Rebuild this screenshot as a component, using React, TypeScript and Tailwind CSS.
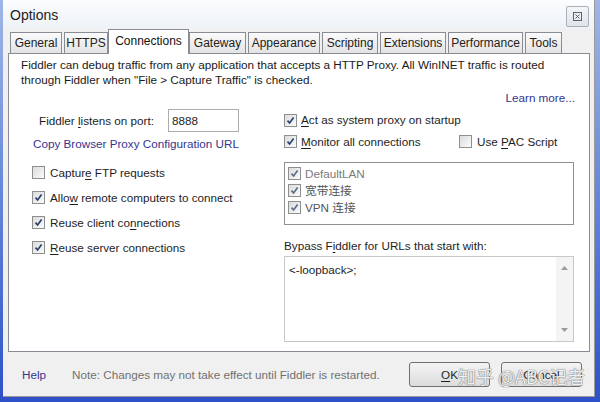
import React from "react";

const F = { fontFamily: '"Liberation Sans", Arial, sans-serif' };

function Check({ checked, disabled }: { checked?: boolean; disabled?: boolean }) {
  return (
    <span className="inline-flex w-[13px] h-[13px] shrink-0 border border-[#8e8f8f] bg-gradient-to-br from-[#dcdcdc] to-[#fbfbfb] items-center justify-center">
      {checked && (
        <svg width="9" height="9" viewBox="0 0 9 9">
          <path d="M1.5 4.6 L3.6 7 L7.6 1.6" fill="none" stroke={disabled ? "#5b6d8a" : "#2a3f6b"} strokeWidth="1.7" />
        </svg>
      )}
    </span>
  );
}

function U({ children }: { children: React.ReactNode }) {
  return <span className="underline underline-offset-[2px]">{children}</span>;
}

const tabs: [string, number][] = [
  ["General", 52],
  ["HTTPS", 44],
  ["Connections", 77],
  ["Gateway", 57],
  ["Appearance", 72],
  ["Scripting", 56],
  ["Extensions", 66],
  ["Performance", 75],
  ["Tools", 37],
];

export default function App() {
  return (
    <div className="relative w-[600px] h-[402px] overflow-hidden bg-gradient-to-b from-[#9fb6e6] to-[#2e50c8]" style={F}>
      <div className="ml-[3px] w-[592px] h-[397px] bg-[#f0f0f0] border-r border-b border-[#9a9a9a] flex flex-col text-[#1e1e1e]">
        {/* title bar */}
        <div className="h-[29px] flex items-center justify-between pl-[7px] pr-[5px] bg-gradient-to-b from-[#fbfdff] to-[#eef2f6]">
          <span className="text-[14px] text-[#222] pt-[2px]">Options</span>
          <span className="w-[23px] h-[21px] mt-[3px] border border-[#a8b0ba] rounded-[2px] bg-gradient-to-b from-[#f4f6f8] to-[#dfe4ea] flex items-center justify-center">
            <svg width="9" height="9" viewBox="0 0 9 9">
              <rect x="0.5" y="0.5" width="8" height="8" fill="none" stroke="#5a6470" />
              <path d="M2.5 2.5 L6.5 6.5 M6.5 2.5 L2.5 6.5" stroke="#5a6470" />
            </svg>
          </span>
        </div>
        {/* tabs */}
        <div className="h-[24px] ml-[7px] flex items-end gap-[2px] relative z-10">
          {tabs.map(([t, w]) =>
            t === "Connections" ? (
              <div
                key={t}
                className="h-[25px] -mb-px bg-white border border-[#898c95] border-b-0 flex items-center justify-center text-[12px] text-[#111] pb-[2px]"
                style={{ width: w + 4, marginLeft: -2, marginRight: -2 }}
              >
                {t}
              </div>
            ) : (
              <div
                key={t}
                className="h-[21px] border border-[#898c95] border-b-0 bg-gradient-to-b from-[#fbfbfb] to-[#e3e3e3] flex items-center justify-center text-[12px] text-[#222]"
                style={{ width: w }}
              >
                {t}
              </div>
            )
          )}
        </div>
        {/* panel */}
        <div className="ml-[5px] mr-[4px] h-[299px] bg-white border border-[#898c95] text-[11.7px] px-[12px] pt-[3px]">
          <div className="leading-[15px] text-[#1a1a1a]">
            Fiddler can debug traffic from any application that accepts a HTTP Proxy. All WinINET traffic is routed
            <br />
            through Fiddler when "File &gt; Capture Traffic" is checked.
          </div>
          <div className="mt-[4px] h-[14px] leading-[14px] text-right text-[#35358f] pr-[2px]">Learn more...</div>
          <div className="mt-[3px] flex">
            {/* left column */}
            <div className="w-[263px] flex flex-col">
              <div className="mt-[1px] h-[23px] flex items-center">
                <span className="ml-[18px]">
                  Fiddler <U>l</U>istens on port:
                </span>
                <div className="ml-[14px] w-[71px] h-[23px] border border-[#abadb3] flex items-center pl-[3px]">8888</div>
              </div>
              <div className="mt-[4px] h-[15px] leading-[15px] ml-[12px] text-[#35358f]">Copy Browser Proxy Configuration URL</div>
              <div className="mt-[9px] flex flex-col">
                {[
                  [false, <>Captur<U>e</U> FTP requests</>],
                  [true, <>Allo<U>w</U> remote computers to connect</>],
                  [true, <>Reuse client co<U>n</U>nections</>],
                  [true, <><U>R</U>euse server connections</>],
                ].map(([c, l], i) => (
                  <div key={i} className="h-[25px] flex items-center ml-[11px] gap-[5px]">
                    <Check checked={c as boolean} />
                    <span>{l as React.ReactNode}</span>
                  </div>
                ))}
              </div>
            </div>
            {/* right column */}
            <div className="w-[290px] flex flex-col">
              <div className="mt-[1px] h-[22px] flex items-center gap-[4px]">
                <Check checked />
                <span>
                  <U>A</U>ct as system proxy on startup
                </span>
              </div>
              <div className="h-[22px] flex items-center">
                <div className="w-[175px] flex items-center gap-[4px]">
                  <Check checked />
                  <span>
                    <U>M</U>onitor all connections
                  </span>
                </div>
                <div className="flex items-center gap-[5px]">
                  <Check />
                  <span>
                    Use <U>P</U>AC Script
                  </span>
                </div>
              </div>
              <div className="mt-[9px] h-[63px] border border-[#8f8f8f] pl-[3px] pt-[2px] flex flex-col" style={{ fontFamily: '"Liberation Sans", "Noto Sans CJK SC", sans-serif' }}>
                {[
                  ["DefaultLAN", true],
                  ["宽带连接", false],
                  ["VPN 连接", false],
                ].map(([t, g]) => (
                  <div key={t as string} className="h-[17px] flex items-center gap-[4px]">
                    <Check checked disabled />
                    <span className={g ? "text-[#7a7a7a]" : "text-[#555]"}>{t as string}</span>
                  </div>
                ))}
              </div>
              <div className="mt-[13px] h-[15px] leading-[15px]">
                Bypass F<U>i</U>ddler for URLs that start with:
              </div>
              <div className="mt-[3px] h-[86px] border border-[#c8c8c8] flex">
                <div className="flex-1 pl-[4px] pt-[4px]">&lt;-loopback&gt;;</div>
                <div className="w-[17px] bg-[#f4f4f4] flex flex-col justify-between items-center py-[9px]">
                  <svg width="7" height="4" viewBox="0 0 7 4">
                    <path d="M0 4 L3.5 0 L7 4 Z" fill="#9a9a9a" />
                  </svg>
                  <svg width="7" height="4" viewBox="0 0 7 4">
                    <path d="M0 0 L3.5 4 L7 0 Z" fill="#9a9a9a" />
                  </svg>
                </div>
              </div>
            </div>
          </div>
        </div>
        {/* footer */}
        <div className="flex-1 flex items-center text-[11.7px] pt-[1px]">
          <span className="ml-[19px] text-[#35358f]">Help</span>
          <span className="ml-[26px] text-[#707070]">Note: Changes may not take effect until Fiddler is restarted.</span>
          <div className="ml-auto w-[81px] h-[25px] border border-[#707070] rounded-[3px] bg-gradient-to-b from-[#f4f4f4] to-[#dcdcdc] flex items-center justify-center">
            <U>O</U>K
          </div>
          <div className="ml-[11px] mr-[12px] w-[81px] h-[25px] border border-[#707070] rounded-[3px] bg-gradient-to-b from-[#f4f4f4] to-[#dcdcdc] flex items-center justify-center">
            Cancel
          </div>
        </div>
      </div>
      {/* watermark */}
      <div
        className="absolute left-[458px] top-[362px] text-[18px] leading-[28px] text-white/90 whitespace-nowrap"
        style={{ fontFamily: '"Noto Sans CJK SC", sans-serif', textShadow: "0 0 1px #666, 0 0 1px #666" }}
      >
        知乎 @ABC记者
      </div>
    </div>
  );
}
